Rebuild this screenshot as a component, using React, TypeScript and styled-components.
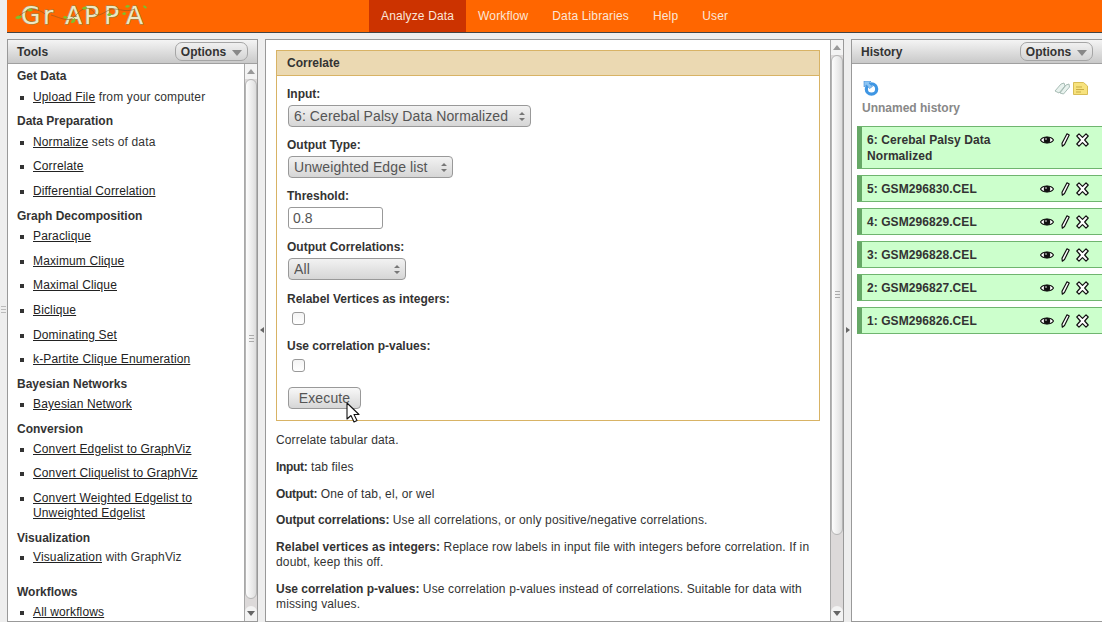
import React from "react";
import styled, { createGlobalStyle } from "styled-components";

const Global = createGlobalStyle`
  html, body { margin: 0; padding: 0; height: 100%; overflow: hidden; background: #eeeeee; }
  body { font-family: "Liberation Sans", Arial, sans-serif; font-size: 12px; color: #333; letter-spacing: 0.14px; }
  #root { height: 622px; }
`;

const Page = styled.div`
  width: 1102px; height: 622px; overflow: hidden; display: flex; flex-direction: column;
`;
const Masthead = styled.header`
  margin-left: 7px; height: 32px; flex: none; background: #ff6600; border-bottom: 1px solid #444;
  display: flex;
`;
const LogoBox = styled.div`
  width: 362px; flex: none; position: relative; overflow: hidden;
`;
const LogoText = styled.div`
  position: absolute; left: 14px; top: 1px; display: flex; font-family: "DejaVu Sans", sans-serif; font-size: 25px; line-height: 30px;
  letter-spacing: 0; color: #eee8c4; white-space: nowrap;
  -webkit-text-stroke: 1px #8a8658;
  paint-order: stroke fill;
`;
const LogoLetter = styled.span<{ $w: number }>`
  display: block; width: ${(p) => p.$w}px;
`;
const LogoVines = styled.svg`
  position: absolute; left: 0; top: 0; width: 150px; height: 32px;
`;
const NavItem = styled.a<{ $active?: boolean }>`
  padding: 0 12px; line-height: 32px; font-size: 12px; color: #fbe6d8; white-space: nowrap;
  background: ${(p) => (p.$active ? "#cc3300" : "transparent")};
`;
const Columns = styled.div`
  flex: 1; min-height: 0; display: flex; padding-top: 6px;
`;
const Gutter = styled.div<{ $w: number }>`
  width: ${(p) => p.$w}px; flex: none; position: relative; background: #eeeeee;
`;
const GutterArrow = styled.svg`
  position: absolute; left: 2px; top: 288px; width: 4px; height: 6px;
`;
const GutterGrip = styled.div`
  position: absolute; left: 1px; top: 267px; width: 5px; height: 7px;
  background: repeating-linear-gradient(#bbb 0 1px, transparent 1px 3px);
`;
const Panel = styled.section<{ $w: number; $open?: boolean }>`
  width: ${(p) => p.$w}px; flex: none; box-sizing: border-box; display: flex; flex-direction: column;
  background: #fff; border: 1px solid #999; overflow: hidden;
  border-right: ${(p) => (p.$open ? "none" : "1px solid #999")};
`;
const PanelHeader = styled.div`
  height: 24px; flex: none; box-sizing: border-box; padding: 0 9px; display: flex; align-items: center; justify-content: space-between;
  background: linear-gradient(#f4f4f4, #c9c9c9); border-bottom: 1px solid #a0a0a0;
  font-weight: bold; color: #333; letter-spacing: 0;
`;
const OptionsButton = styled.div`
  width: 73px; height: 19px; box-sizing: border-box; border: 1px solid #a5a5a5; border-radius: 7px;
  display: flex; align-items: center; justify-content: center; gap: 6px; font-weight: bold; color: #333;
  background: linear-gradient(#f0f0f0, #d4d4d4);
`;
const Caret = styled.svg`
  width: 10px; height: 6px; margin-top: 2px;
`;
const PanelBody = styled.div`
  flex: 1; min-height: 0; display: flex;
`;
const Scroll = styled.div`
  flex: 1; min-width: 0; overflow: hidden;
`;
const ScrollBar = styled.div`
  width: 13px; flex: none; box-sizing: border-box; border-left: 1px solid #a8a8a8; background: #dcd9d9;
  display: flex; flex-direction: column;
`;
const ScrollBtn = styled.div`
  height: 15px; flex: none; background: #f3f3f3; display: flex; align-items: center; justify-content: center;
`;
const ScrollBtnBottom = styled(ScrollBtn)`
  margin-top: auto; border-radius: 6px 6px 0 0;
`;
const Thumb = styled.div<{ $h: number }>`
  height: ${(p) => p.$h}px; flex: none; box-sizing: border-box; border: 1px solid #b5b5b5; border-radius: 6px;
  background: linear-gradient(90deg, #fdfdfd, #e8e8e8 70%, #dcdcdc); display: flex; align-items: center; justify-content: center;
`;
const ThumbGrip = styled.div`
  width: 5px; height: 8px; background: repeating-linear-gradient(#aaa 0 1px, transparent 1px 3px);
`;
const Tri = styled.svg`
  width: 8px; height: 5px;
`;

const ToolList = styled.div`
  padding: 5px 0 0 9px;
`;
const SectionTitle = styled.div<{ $h?: number; $mt?: number }>`
  box-sizing: border-box; height: ${(p) => p.$h ?? 20.6}px; line-height: 14px; font-weight: bold; color: #333; letter-spacing: 0;
  margin-top: ${(p) => p.$mt ?? 0}px;
`;
const ToolItem = styled.div`
  position: relative; padding-left: 16px; line-height: 15px; margin-bottom: 9.6px; width: 178px; color: #333;
  &::before { content: ""; position: absolute; left: 3px; top: 6px; width: 4px; height: 4px; background: #333; }
`;
const Link = styled.a`
  color: #222; text-decoration: underline;
`;

const Center = styled.div`
  padding: 10px 10px 0;
`;
const FormBox = styled.div`
  height: 371px; box-sizing: border-box; border: 1px solid #d8b365; display: flex; flex-direction: column;
`;
const FormTitle = styled.div`
  height: 25px; flex: none; box-sizing: border-box; padding: 0 10px; line-height: 24px; font-weight: bold; color: #333; letter-spacing: 0;
  background: #ebd9b2; border-bottom: 1px solid #d8b365;
`;
const FormBody = styled.div`
  padding: 8px 10px 0;
`;
const Row = styled.div<{ $h?: number }>`
  height: ${(p) => p.$h ?? 51}px;
`;
const Label = styled.div<{ $h?: number }>`
  font-weight: bold; line-height: 21px; height: ${(p) => p.$h ?? 21}px; color: #333; letter-spacing: 0;
`;
const SelectWrap = styled.div<{ $w: number }>`
  position: relative; width: ${(p) => p.$w}px; height: 22px; margin-left: 1px;
`;
const Select = styled.select`
  appearance: none; width: 100%; height: 100%; box-sizing: border-box; margin: 0; padding: 0 0 0 5px; display: block;
  border: 1px solid #999; border-radius: 4px; background: linear-gradient(#f2f2f2, #d6d6d6);
  font: 14px "Liberation Sans", Arial, sans-serif; letter-spacing: 0.1px; color: #555;
`;
const SelectArrows = styled.svg`
  position: absolute; right: 6px; top: 6px; width: 6px; height: 11px; pointer-events: none;
`;
const TextInput = styled.input`
  display: block; width: 95px; height: 22px; box-sizing: border-box; margin: 0 0 0 1px; padding: 0 4px;
  border: 1px solid #999; border-radius: 3px; background: #fff; font: 14px "Liberation Sans", Arial, sans-serif; color: #555;
`;
const Check = styled.div`
  width: 11px; height: 11px; margin-left: 5px; margin-top: -1px; border: 1px solid #999; border-radius: 3px; background: linear-gradient(#f4f4f4, #fff);
`;
const ExecuteWrap = styled.div`
  position: relative; width: 73px; margin: 4px 0 0 1px;
`;
const ExecuteButton = styled.div`
  height: 22px; box-sizing: border-box; border: 1px solid #999; border-radius: 4px; text-align: center; line-height: 20px;
  font-size: 14px; color: #555; background: linear-gradient(#f8f8f8, #d6d6d6);
`;
const Cursor = styled.svg`
  position: absolute; left: 58px; top: 15px; width: 14px; height: 21px;
`;
const Para = styled.p`
  margin: 0 0 11.75px; line-height: 15px; color: #333;
`;
const Strong = styled.b<{ $ls?: number }>`
  letter-spacing: ${(p) => p.$ls ?? 0}px;
`;
const Help = styled.div`
  padding-top: 12px;
`;

const HistoryBody = styled.div`
  padding: 17px 0 0 5px; flex: 1; min-height: 0; overflow: hidden;
`;
const HistoryTop = styled.div`
  display: flex; justify-content: space-between; align-items: center; height: 15px; padding: 0 14px 0 6px;
`;
const IconGroup = styled.div`
  display: flex; gap: 3px; align-items: center;
`;
const HistoryName = styled.div`
  font-weight: bold; color: #888; margin: 5px 0 11px 5px; line-height: 14px; letter-spacing: 0;
`;
const DatasetRow = styled.div`
  box-sizing: border-box; display: flex; justify-content: space-between; margin-bottom: 6px; padding: 5px 0 4px 5px; width: 245px;
  background: #ccffcc; border: 1px solid #6fb56f; border-left: 5px solid #66a866; border-right: none;
  font-weight: bold; line-height: 16px; color: #333; letter-spacing: 0.07px;
`;
const DatasetName = styled.div`
  width: 150px;
`;
const DatasetIcons = styled.div`
  display: flex; align-items: flex-start; gap: 6px; width: 60px; flex: none; height: 16px; margin-right: 2px;
`;
const ActionIcon = styled.svg<{ $w: number; $ml?: number }>`
  width: ${(p) => p.$w}px; height: 14px; flex: none; display: block; margin-top: 1px; margin-left: ${(p) => p.$ml ?? 0}px;
`;

const Up = () => (
  <Tri viewBox="0 0 8 5"><path d="M4 0 8 5H0z" fill="#999" /></Tri>
);
const Down = () => (
  <Tri viewBox="0 0 8 5"><path d="M0 0H8L4 5z" fill="#666" /></Tri>
);
const Bar = ({ thumb }: { thumb: number }) => (
  <ScrollBar>
    <ScrollBtn><Up /></ScrollBtn>
    <Thumb $h={thumb}><ThumbGrip /></Thumb>
    <ScrollBtnBottom><Down /></ScrollBtnBottom>
  </ScrollBar>
);
const Options = () => (
  <OptionsButton>
    Options
    <Caret viewBox="0 0 10 6"><path d="M0 0H10L5 6z" fill="#888" /></Caret>
  </OptionsButton>
);
const Arrows = () => (
  <SelectArrows viewBox="0 0 6 11">
    <path d="M3 1 6 4H0zM0 7H6L3 10z" fill="#777" />
  </SelectArrows>
);
const Eye = () => (
  <ActionIcon $w={14} viewBox="0 0 14 14">
    <path d="M.5 7C3 3 11 3 13.500 7 11 11 3 11 .5 7z" fill="#fff" stroke="#111" strokeWidth="1.2" />
    <circle cx="7" cy="7" r="3.2" fill="#111" />
    <circle cx="6" cy="6" r=".8" fill="#fff" />
  </ActionIcon>
);
const Pencil = () => (
  <ActionIcon $w={9} $ml={1} viewBox="0 0 9 14">
    <path d="M6 .8 8.200 2 3.500 11.500 1.300 13.200 1 10.200z" fill="#fff" stroke="#111" strokeWidth="1.2" strokeLinejoin="round" />
  </ActionIcon>
);
const Cross = () => (
  <ActionIcon $w={13} viewBox="0 0 13 14">
    <path d="M.8 3 3 .8 6.500 4.400 10 .8 12.200 3 8.700 7 12.200 11 10 13.200 6.500 9.600 3 13.200 .8 11 4.300 7z" fill="#fff" stroke="#111" strokeWidth="1.2" strokeLinejoin="round" />
  </ActionIcon>
);
const Dataset = ({ name }: { name: string }) => (
  <DatasetRow>
    <DatasetName>{name}</DatasetName>
    <DatasetIcons><Eye /><Pencil /><Cross /></DatasetIcons>
  </DatasetRow>
);

const leaf = "#7fbf2a";
const vine = "#8a5a20";

export default function App() {
  return (
    <Page>
      <Global />
      <Masthead>
        <LogoBox>
          <LogoText>
            <LogoLetter $w={22}>G</LogoLetter>
            <LogoLetter $w={22}>r</LogoLetter>
            <LogoLetter $w={19}>A</LogoLetter>
            <LogoLetter $w={20}>P</LogoLetter>
            <LogoLetter $w={22}>P</LogoLetter>
            <LogoLetter $w={18}>A</LogoLetter>
          </LogoText>
          <LogoVines viewBox="0 0 150 32" fill="none">
            <path d="M10 18C18 9 30 7 38 14M44 15C55 18 62 24 70 14 76 7 84 6 88 14 94 18 100 8 108 9 116 10 120 12 128 9" stroke={vine} strokeWidth=".6" />
            <path d="M8 18c2-3 5-3 7-2-1 3-4 4-7 2zM20 10c2-2 4-2 6 0-2 2-4 2-6 0zM56 17c2-2 4-1 5 1-2 1-4 1-5-1zM64 23c0-3 2-4 4-5 1 3 0 5-4 5zM75 8c2-2 4-2 5 0-1 2-4 2-5 0zM118 7c1-2 3-3 5-1-1 2-3 2-5 1zM115 14c1-2 3-2 4-1 0 2-2 3-4 1zM100 15c1-2 3-2 5-1-1 2-3 3-5 1zM136 6c2-1 3 0 4 2-2 1-3 0-4-2z" fill={leaf} />
          </LogoVines>
        </LogoBox>
        <NavItem $active>Analyze Data</NavItem>
        <NavItem>Workflow</NavItem>
        <NavItem>Data Libraries</NavItem>
        <NavItem>Help</NavItem>
        <NavItem>User</NavItem>
      </Masthead>
      <Columns>
        <Gutter $w={7}><GutterGrip /></Gutter>
        <Panel $w={251}>
          <PanelHeader>
            Tools
            <Options />
          </PanelHeader>
          <PanelBody>
            <Scroll>
              <ToolList>
                <SectionTitle>Get Data</SectionTitle>
                <ToolItem><Link>Upload File</Link> from your computer</ToolItem>
                <SectionTitle>Data Preparation</SectionTitle>
                <ToolItem><Link>Normalize</Link> sets of data</ToolItem>
                <ToolItem><Link>Correlate</Link></ToolItem>
                <ToolItem><Link>Differential Correlation</Link></ToolItem>
                <SectionTitle>Graph Decomposition</SectionTitle>
                <ToolItem><Link>Paraclique</Link></ToolItem>
                <ToolItem><Link>Maximum Clique</Link></ToolItem>
                <ToolItem><Link>Maximal Clique</Link></ToolItem>
                <ToolItem><Link>Biclique</Link></ToolItem>
                <ToolItem><Link>Dominating Set</Link></ToolItem>
                <ToolItem><Link>k-Partite Clique Enumeration</Link></ToolItem>
                <SectionTitle>Bayesian Networks</SectionTitle>
                <ToolItem><Link>Bayesian Network</Link></ToolItem>
                <SectionTitle $h={19.8}>Conversion</SectionTitle>
                <ToolItem><Link>Convert Edgelist to GraphViz</Link></ToolItem>
                <ToolItem><Link>Convert Cliquelist to GraphViz</Link></ToolItem>
                <ToolItem><Link>Convert Weighted Edgelist to Unweighted Edgelist</Link></ToolItem>
                <SectionTitle $mt={10.4} $h={19}>Visualization</SectionTitle>
                <ToolItem><Link>Visualization</Link> with GraphViz</ToolItem>
                <SectionTitle $mt={19.6}>Workflows</SectionTitle>
                <ToolItem><Link>All workflows</Link></ToolItem>
              </ToolList>
            </Scroll>
            <Bar thumb={520} />
          </PanelBody>
        </Panel>
        <Gutter $w={7}>
          <GutterArrow viewBox="0 0 4 6"><path d="M4 0V6L0 3z" fill="#666" /></GutterArrow>
        </Gutter>
        <Panel $w={579}>
          <PanelBody>
            <Scroll>
              <Center>
                <FormBox>
                  <FormTitle>Correlate</FormTitle>
                  <FormBody>
                    <Row>
                      <Label>Input:</Label>
                      <SelectWrap $w={243}>
                        <Select defaultValue="a"><option value="a">6: Cerebal Palsy Data Normalized</option></Select>
                        <Arrows />
                      </SelectWrap>
                    </Row>
                    <Row>
                      <Label>Output Type:</Label>
                      <SelectWrap $w={165}>
                        <Select defaultValue="a"><option value="a">Unweighted Edge list</option></Select>
                        <Arrows />
                      </SelectWrap>
                    </Row>
                    <Row>
                      <Label>Threshold:</Label>
                      <TextInput defaultValue="0.8" />
                    </Row>
                    <Row $h={52}>
                      <Label>Output Correlations:</Label>
                      <SelectWrap $w={118}>
                        <Select defaultValue="a"><option value="a">All</option></Select>
                        <Arrows />
                      </SelectWrap>
                    </Row>
                    <Row $h={47}>
                      <Label $h={24}>Relabel Vertices as integers:</Label>
                      <Check />
                    </Row>
                    <Row $h={47}>
                      <Label $h={24}>Use correlation p-values:</Label>
                      <Check />
                    </Row>
                    <ExecuteWrap>
                      <ExecuteButton>Execute</ExecuteButton>
                      <Cursor viewBox="0 0 14 21">
                        <path d="M1 1V17L5 13.500 8 20 11 18.600 8 12.500H13z" fill="#fff" stroke="#111" strokeWidth="1.1" strokeLinejoin="round" />
                      </Cursor>
                    </ExecuteWrap>
                  </FormBody>
                </FormBox>
                <Help>
                  <Para>Correlate tabular data.</Para>
                  <Para><Strong $ls={-0.3}>Input:</Strong> tab files</Para>
                  <Para><Strong $ls={-0.3}>Output:</Strong> One of tab, el, or wel</Para>
                  <Para><Strong $ls={-0.1}>Output correlations:</Strong> Use all correlations, or only positive/negative correlations.</Para>
                  <Para><Strong $ls={0.07}>Relabel vertices as integers:</Strong> Replace row labels in input file with integers before correlation. If in doubt, keep this off.</Para>
                  <Para><Strong>Use correlation p-values:</Strong> Use correlation p-values instead of correlations. Suitable for data with missing values.</Para>
                </Help>
              </Center>
            </Scroll>
            <Bar thumb={480} />
          </PanelBody>
        </Panel>
        <Gutter $w={7}>
          <GutterArrow viewBox="0 0 4 6"><path d="M0 0V6L4 3z" fill="#666" /></GutterArrow>
        </Gutter>
        <Panel $w={251} $open>
          <PanelHeader>
            History
            <Options />
          </PanelHeader>
          <HistoryBody>
            <HistoryTop>
              <svg width="16" height="15" viewBox="0 0 16 15">
                <circle cx="8.500" cy="8" r="5.200" fill="#fff" stroke="#3f96e3" strokeWidth="3.200" />
                <path d="M1 0H8L6 2.200 9.500 5.500 6.500 7.500 3.500 4 1 6z" fill="#8cc4f2" stroke="#3d8cd8" strokeWidth=".6" />
              </svg>
              <IconGroup>
                <svg width="16" height="13" viewBox="0 0 16 13">
                  <path d="M1 9 7 2 10 1 11 4 5 11zM6 11 12 3 15 2 15.500 5 9.500 12z" fill="#e8f2ee" stroke="#9fb5ae" strokeWidth=".9" />
                </svg>
                <svg width="15" height="13" viewBox="0 0 15 13">
                  <path d="M.5.500H10.500L14.500 4V12.500H.5z" fill="#f7e27d" stroke="#d8bd55" />
                  <path d="M3 5H9M3 7.500H11M3 10H8" stroke="#c9ad45" />
                </svg>
              </IconGroup>
            </HistoryTop>
            <HistoryName>Unnamed history</HistoryName>
            <Dataset name="6: Cerebal Palsy Data Normalized" />
            <Dataset name="5: GSM296830.CEL" />
            <Dataset name="4: GSM296829.CEL" />
            <Dataset name="3: GSM296828.CEL" />
            <Dataset name="2: GSM296827.CEL" />
            <Dataset name="1: GSM296826.CEL" />
          </HistoryBody>
        </Panel>
      </Columns>
    </Page>
  );
}
